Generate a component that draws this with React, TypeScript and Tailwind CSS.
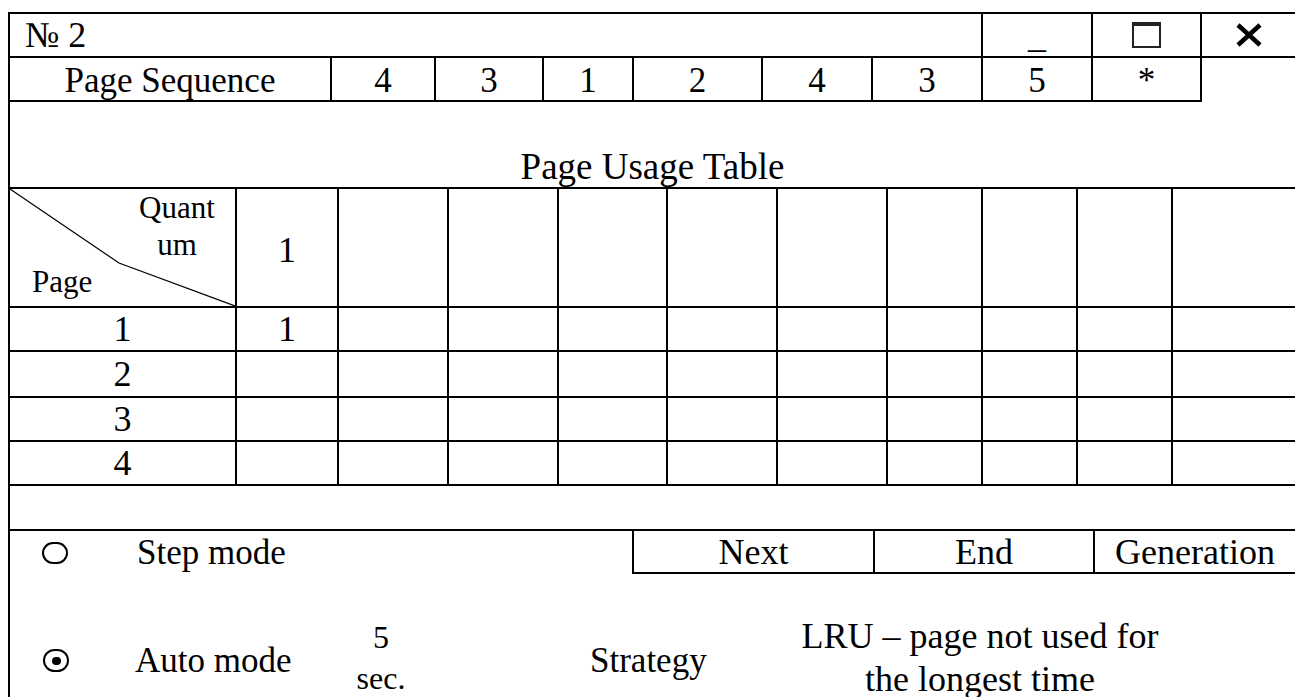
const seqCells = [
  { value: "4", width: "w-[104px]" },
  { value: "3", width: "w-[108px]" },
  { value: "1", width: "w-[90px]" },
  { value: "2", width: "w-[129px]" },
  { value: "4", width: "w-[110px]" },
  { value: "3", width: "w-[110px]" },
  { value: "5", width: "w-[110px]" },
  { value: "*", width: "w-[109px]" },
];

const quantumCols = [
  "w-[102px]",
  "w-[110px]",
  "w-[110px]",
  "w-[109px]",
  "w-[110px]",
  "w-[110px]",
  "w-[95px]",
  "w-[95px]",
  "w-[95px]",
  "flex-1",
];

const pageRows = [
  { page: "1", first: "1", height: "h-[44px]" },
  { page: "2", first: "", height: "h-[46px]" },
  { page: "3", first: "", height: "h-[44px]" },
  { page: "4", first: "", height: "h-[44px]" },
];

export default function App() {
  return (
    <div className="w-[1295px] h-[697px] overflow-hidden bg-white pl-[8px] pt-[12px] text-black font-['Liberation_Serif','Times_New_Roman',serif]">
      <div className="h-[700px] border-l-2 border-t-2 border-black">
        {/* window title bar */}
        <div className="flex h-[44px] border-b-2 border-black">
          <div className="w-[971px] flex items-center pl-[15px] text-[36px] leading-none">№ 2</div>
          <div className="w-[110px] flex items-center justify-center border-l-2 border-black text-[36px] leading-none">_</div>
          <div className="w-[109px] flex items-center justify-center border-l-2 border-black">
            <div className="w-[29px] h-[26px] border-2 border-t-4 border-[#222]" />
          </div>
          <div className="flex-1 flex items-center justify-center border-l-2 border-black">
            <svg width="26" height="24" viewBox="0 0 26 24">
              <path d="M2 2 L24 22 M24 2 L2 22" stroke="#000" strokeWidth="4.5" fill="none" />
            </svg>
          </div>
        </div>

        {/* page sequence */}
        <div className="flex w-[1192px] h-[44px] border-b-2 border-r-2 border-black text-[35px] leading-none">
          <div className="w-[320px] flex items-center justify-center pt-[2px]">Page Sequence</div>
          {seqCells.map((c, i) => (
            <div key={i} className={`${c.width} flex items-center justify-center border-l-2 border-black pt-[2px]`}>
              {c.value}
            </div>
          ))}
        </div>

        <div className="h-[85px] flex items-end justify-center pb-[2px] text-[37px] leading-none">Page Usage Table</div>

        {/* page usage table */}
        <div className="border-t-2 border-black">
          <div className="flex h-[119px] border-b-2 border-black">
            <div className="relative w-[225px]">
              <svg className="absolute inset-0" width="225" height="117" viewBox="0 0 225 117">
                <polyline points="0,0 109,74 225,117" stroke="#000" strokeWidth="1.2" fill="none" />
              </svg>
              <div className="ml-[117px] w-[100px] text-center text-[31px] leading-[37px]">
                Quant
                <br />
                um
              </div>
              <div className="pl-[22px] text-[31px] leading-[37px]">Page</div>
            </div>
            {quantumCols.map((w, i) => (
              <div key={i} className={`${w} flex items-center justify-center border-l-2 border-black pt-[4px] text-[36px] leading-none`}>
                {i === 0 ? "1" : ""}
              </div>
            ))}
          </div>

          {pageRows.map((r) => (
            <div key={r.page} className={`flex ${r.height} border-b-2 border-black text-[36px] leading-none`}>
              <div className="w-[225px] flex items-center justify-center">{r.page}</div>
              {quantumCols.map((w, i) => (
                <div key={i} className={`${w} flex items-center justify-center border-l-2 border-black`}>
                  {i === 0 ? r.first : ""}
                </div>
              ))}
            </div>
          ))}
        </div>

        <div className="h-[45px] border-b-2 border-black" />

        {/* controls */}
        <div className="flex h-[43px]">
          <div className="w-[622px] flex items-center">
            <div className="w-[125px] pl-[32px]">
              <div className="w-[26px] h-[22px] rounded-full border-[2.5px] border-black" />
            </div>
            <div className="pl-[2px] text-[35px] leading-none">Step mode</div>
          </div>
          <div className="flex-1 flex border-l-2 border-b-2 border-black text-[36px] leading-none">
            <div className="w-[239px] flex items-center justify-center">Next</div>
            <div className="w-[220px] flex items-center justify-center border-l-2 border-black">End</div>
            <div className="flex-1 flex items-center justify-center border-l-2 border-black">Generation</div>
          </div>
        </div>

        <div className="flex items-start">
          <div className="w-[125px] pl-[33px] pt-[75px]">
            <div className="w-[26px] h-[23px] rounded-full border-[2.5px] border-black flex items-center justify-center">
              <div className="w-[9px] h-[8px] rounded-full bg-black" />
            </div>
          </div>
          <div className="w-[216px] pt-[69px] text-[35px] leading-none">Auto mode</div>
          <div className="w-[60px] pt-[43px] text-center text-[32px] leading-[41px]">
            5
            <br />
            sec.
          </div>
          <div className="w-[369px] pl-[179px] pt-[69px] text-[35px] leading-none">Strategy</div>
          <div className="w-[400px] pt-[41px] text-center text-[36px] leading-[43px]">
            LRU – page not used for
            <br />
            the longest time
          </div>
        </div>
      </div>
    </div>
  );
}
